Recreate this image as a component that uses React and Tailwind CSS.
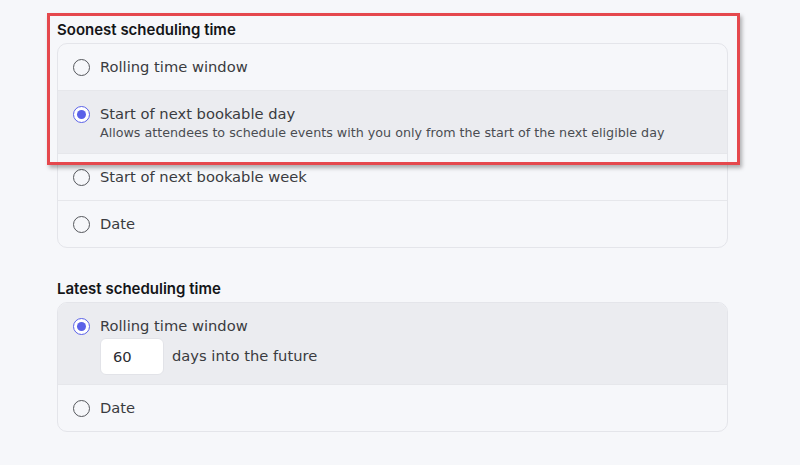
import { useState } from "react";

const font = { fontFamily: "'DejaVu Sans', 'Noto Sans', sans-serif" };
const headFont = { fontFamily: "Inter, 'Noto Sans', sans-serif" };

function Radio({ checked }) {
  return (
    <span
      className={`shrink-0 w-[17px] h-[17px] rounded-full border-[1.5px] flex items-center justify-center ${
        checked ? "border-[#5a61e8] bg-white" : "border-[#55575c] bg-transparent"
      }`}
    >
      {checked && <span className="w-[9px] h-[9px] rounded-full bg-[#5a61e8]" />}
    </span>
  );
}

function Option({ label, description, checked, children }) {
  return (
    <div
      className={`flex items-start gap-[10px] pl-[15px] pr-4 pt-[13px] ${checked ? "bg-[#ebecf0]" : ""} ${
        description ? "pb-[12px]" : children ? "pb-[9px]" : "pb-[13px]"
      }`}
    >
      <div className="h-[20px] flex items-center">
        <Radio checked={checked} />
      </div>
      <div className="flex flex-col">
        <span className="text-[14.7px] leading-[20px] text-[#3a3b40]">{label}</span>
        {description && (
          <span className="text-[12.7px] leading-[16px] mt-[1px] text-[#4a4c52]">{description}</span>
        )}
        {children}
      </div>
    </div>
  );
}

export default function App() {
  const [days, setDays] = useState("60");

  const soonest = [
    { label: "Rolling time window" },
    {
      label: "Start of next bookable day",
      description: "Allows attendees to schedule events with you only from the start of the next eligible day",
      checked: true,
    },
    { label: "Start of next bookable week" },
    { label: "Date" },
  ];

  return (
    <div className="relative w-[800px] h-[465px] overflow-hidden bg-[#f6f7fa]" style={font}>
      <div className="pl-[57px] pt-[20px] w-[728px]">
        <h2 className="text-[15px] leading-[20px] font-semibold text-[#141518] mb-[3px]" style={headFont}>
          Soonest scheduling time
        </h2>
        <div className="rounded-[10px] border border-[#e4e5ea] overflow-hidden divide-y divide-[#e6e7eb]">
          {soonest.map((o) => (
            <Option key={o.label} {...o} />
          ))}
        </div>

        <h2 className="text-[15px] leading-[20px] font-semibold text-[#141518] mt-[31px] mb-[3px]" style={headFont}>
          Latest scheduling time
        </h2>
        <div className="rounded-[10px] border border-[#e4e5ea] overflow-hidden divide-y divide-[#e6e7eb]">
          <Option label="Rolling time window" checked>
            <div className="flex items-center gap-2 mt-[2px]">
              <input
                value={days}
                onChange={(e) => setDays(e.target.value)}
                className="w-[64px] h-[37px] rounded-[6px] border border-[#e2e3e8] bg-white px-[12px] text-[14.7px] text-[#2a2b30] outline-none"
                style={font}
              />
              <span className="text-[14.7px] text-[#3a3b40]">days into the future</span>
            </div>
          </Option>
          <Option label="Date" />
        </div>
      </div>

      <div className="absolute left-[47px] top-[13px] w-[693px] h-[152px] border-[3px] border-[#e5484d] shadow-[2px_3px_4px_rgba(0,0,0,0.3)] pointer-events-none" />
    </div>
  );
}
